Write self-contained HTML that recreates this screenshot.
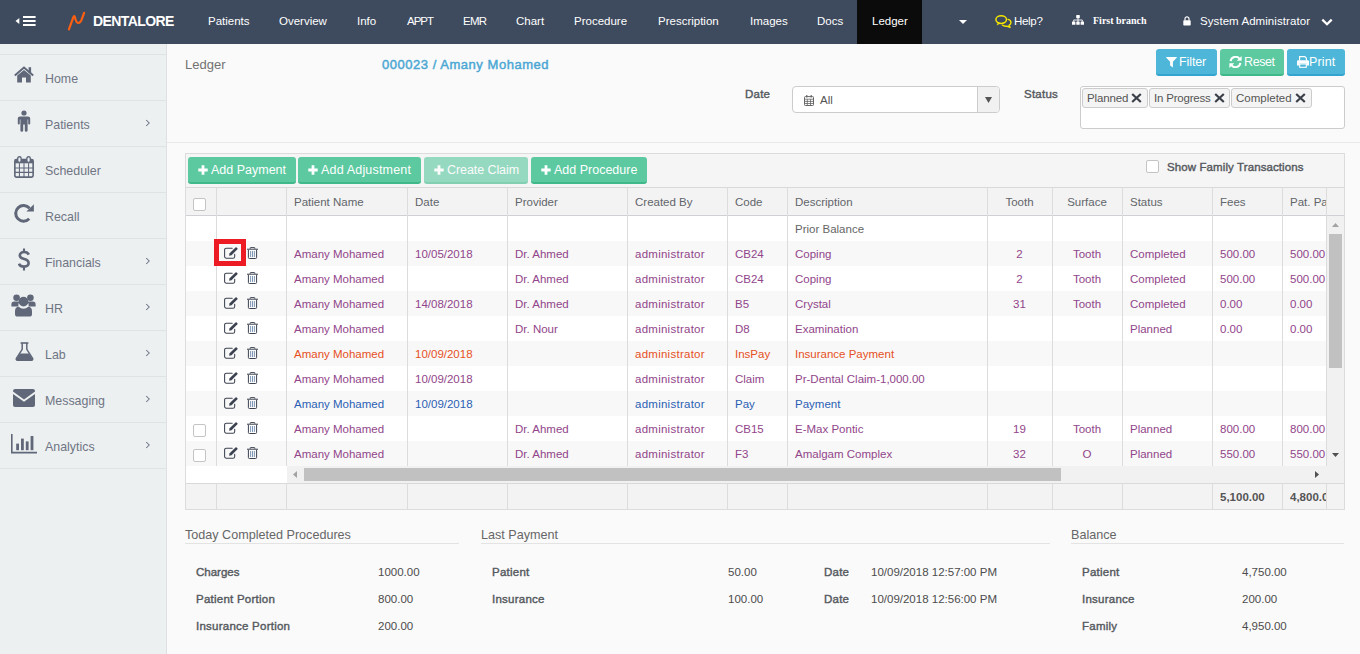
<!DOCTYPE html>
<html>
<head>
<meta charset="utf-8">
<title>Ledger</title>
<style>
*{box-sizing:border-box;margin:0;padding:0}
html,body{width:1360px;height:654px;overflow:hidden}
body{font-family:"Liberation Sans",sans-serif;font-size:13px;color:#5f6368;background:#fafafa;position:relative}
.abs{position:absolute;white-space:nowrap}
svg{display:block}
/* NAVBAR */
#nav{position:absolute;left:0;top:0;width:1360px;height:44px;background:#3e4a5e}
#nav .t{position:absolute;top:0;height:44px;line-height:43px;color:#fff;font-size:11.5px;white-space:nowrap}
#nav .active{position:absolute;left:857px;top:0;width:65px;height:44px;background:#0b0b0b}
/* SIDEBAR */
#side{position:absolute;left:0;top:44px;width:167px;height:610px;background:#edf0f1;border-right:1px solid #dde1e4}
#side .it{position:absolute;left:0;width:166px;height:46px;border-top:1px solid #dfe3e6}
#side .it .lb{position:absolute;left:45px;top:0;line-height:49px;font-size:12.4px;color:#6f7584}
#side .it .ic{position:absolute}
#side .it .ch{position:absolute;left:145px;top:18px}
/* content */
.btn{position:absolute;height:27px;border-radius:3px;color:#fff;font-size:12.5px;line-height:27px;white-space:nowrap}
.btn.blue{background:#4db6d9;border-bottom:2px solid #31a4cf}
.btn.green{background:#5cc9a0;border-bottom:2px solid #3fb88a}
.btn.dis{opacity:.62}

/* grid */
#grid{position:absolute;left:185px;top:153px;width:1160px;height:357px;border:1px solid #dcdcdc;background:#fff}
#tb{position:absolute;left:0;top:0;width:1158px;height:33px;background:#f5f5f5}
#hd{position:absolute;left:0;top:33px;width:1158px;height:29px;background:#f3f3f4;border-top:1px solid #d9d9d9;border-bottom:1px solid #d0d0d4}
#hd span{position:absolute;top:0;line-height:28px;color:#62656a;font-size:11.5px;white-space:nowrap}
.vl{position:absolute;width:1px;background:#dcdcde}
.row{position:absolute;left:0;width:1140px;height:25px;font-size:11.5px;line-height:27px;color:#91458a}
.row.alt{background:#f8f8f8}
.row span{position:absolute;top:0;white-space:nowrap}
.row.or{color:#e6501e}
.row.bl{color:#2b5fb4}
.row.gr{color:#666}
.c1{left:108px}.c2{left:229px}.c3{left:329px}.c4{left:449px;letter-spacing:.26px}.c5{left:549px}.c6{left:609px}
.c7{left:801px;width:65px;text-align:center}.c8{left:866px;width:70px;text-align:center}
.c9{left:944px}.c10{left:1034px}.c11{left:1104px}
.cb{position:absolute;width:13px;height:13px;border:1px solid #c4c4c4;border-radius:2px;background:#fff}
#ft{position:absolute;left:0;top:329px;width:1158px;height:26px;background:#f3f3f4;border-top:1px solid #d9d9d9}
#ft span{position:absolute;top:0;line-height:26px;font-weight:bold;color:#555;font-size:11.5px}
.sec{position:absolute;font-size:12.6px;color:#666;white-space:nowrap}
.ul{position:absolute;height:1px;background:#e3e3e3}
.lab{position:absolute;font-size:11.5px;font-weight:normal;-webkit-text-stroke:.4px #55595e;color:#55595e;white-space:nowrap;letter-spacing:.24px}
.val{position:absolute;font-size:11.5px;color:#4c4c4c;white-space:nowrap}
.tag{height:20px;line-height:18px;border:1px solid #ccc;border-radius:3px;background:#f4f4f4;font-size:11.5px;color:#555;padding-left:4px}
</style>
</head>
<body>
<!-- NAV -->
<div id="nav">
  <div class="active"></div>
  <svg class="abs" style="left:15px;top:16px" width="21" height="10" viewBox="0 0 21 10"><path d="M.5 5L4.3 2V8Z" fill="#fff"/><rect x="8" y="0" width="12.6" height="2" fill="#fff"/><rect x="8" y="4" width="12.6" height="2" fill="#fff"/><rect x="8" y="8" width="12.6" height="2" fill="#fff"/></svg>
  <svg class="abs" style="left:67px;top:11px" width="19" height="20" viewBox="0 0 19 20"><path d="M1.9 18.4L6.3 6.4Q7.3 3.6 8 6.4Q9.2 11.6 11.2 12Q13.6 12 15.1 7.4L17.1 1.8" fill="none" stroke="#fa5f12" stroke-width="2.2" stroke-linecap="round" stroke-linejoin="round"/></svg>
  <div class="t" style="left:93px;font-weight:bold;font-size:14px;letter-spacing:-.6px">DENTALORE</div>
  <div class="t" style="left:208px">Patients</div>
  <div class="t" style="left:279px">Overview</div>
  <div class="t" style="left:357px">Info</div>
  <div class="t" style="left:407px;letter-spacing:-1px">APPT</div>
  <div class="t" style="left:463px;letter-spacing:-.7px">EMR</div>
  <div class="t" style="left:516px">Chart</div>
  <div class="t" style="left:574px">Procedure</div>
  <div class="t" style="left:658px">Prescription</div>
  <div class="t" style="left:750px">Images</div>
  <div class="t" style="left:817px">Docs</div>
  <div class="t" style="left:872px">Ledger</div>
  <svg class="abs" style="left:959px;top:20px" width="8" height="4" viewBox="0 0 8 4"><path d="M0 0H8L4 4Z" fill="#fff"/></svg>
  <div class="t" style="left:1014px;letter-spacing:-.3px">Help?</div>
  <div class="t" style="left:1093px;font-family:'Liberation Serif',serif;font-weight:bold;font-size:10px;line-height:41px">First branch</div>
  <div class="t" style="left:1200px;letter-spacing:.07px">System Administrator</div>

  <svg class="abs" style="left:995px;top:15px" width="17" height="13" viewBox="0 0 17 13"><ellipse cx="6.2" cy="4.6" rx="5.3" ry="3.8" fill="none" stroke="#f3e500" stroke-width="1.5"/><path d="M3 7.6L1.6 10.4L5.4 8.4Z" fill="#f3e500"/><path d="M12.6 4.2C14.6 4.8 16 6 16 7.6C16 8.8 15.2 9.8 14 10.4L15 12.4L11.8 11.2C9.8 11.4 8 10.8 7 9.8" fill="none" stroke="#f3e500" stroke-width="1.4" stroke-linejoin="round"/></svg>
  <svg class="abs" style="left:1072px;top:15px" width="12" height="10" viewBox="0 0 12 10"><rect x="4.2" y="0" width="3.6" height="3.2" rx=".4" fill="#fff"/><rect x="0" y="6.6" width="3.4" height="3.2" rx=".4" fill="#fff"/><rect x="4.3" y="6.6" width="3.4" height="3.2" rx=".4" fill="#fff"/><rect x="8.6" y="6.6" width="3.4" height="3.2" rx=".4" fill="#fff"/><path d="M6 3v3.8M1.7 6.8V5h8.6v1.8" fill="none" stroke="#fff" stroke-width=".9"/></svg>
  <svg class="abs" style="left:1183px;top:16px" width="8" height="10" viewBox="0 0 8 10"><path d="M2 4.4V2.8a2 2 0 0 1 4 0V4.4" fill="none" stroke="#fff" stroke-width="1.2"/><rect x="0.3" y="4.2" width="7.4" height="5.2" rx=".7" fill="#fff"/></svg>
  <svg class="abs" style="left:1321px;top:18px" width="12" height="8" viewBox="0 0 12 8"><path d="M1.3 1.6L6 6.2L10.7 1.6" fill="none" stroke="#fff" stroke-width="2.3"/></svg>
</div>

<!-- SIDEBAR -->
<div id="side">
  <div class="it" style="top:10px"><svg class="ic" style="left:14px;top:11px" width="20" height="17" viewBox="0 0 20 17"><path d="M.8 9.4L10 1.6L19.2 9.4" fill="none" stroke="#5f6779" stroke-width="2"/><rect x="14.6" y="1.2" width="2.5" height="6" fill="#5f6779"/><path d="M3.2 9.6L10 4L16.8 9.6V16.4H12V11.4H8V16.4H3.2Z" fill="#5f6779"/></svg><div class="lb">Home</div></div>
  <div class="it" style="top:56px"><svg class="ic" style="left:17px;top:9px" width="14" height="22" viewBox="0 0 14 22"><circle cx="7" cy="3" r="2.6" fill="#5f6779"/><path d="M3 6.4H11A2.2 2.2 0 0 1 13.2 8.6V13.4A1 1 0 0 1 11.2 13.4V9.4H10.6V20.4A1.4 1.4 0 0 1 7.8 20.4V14.4H6.2V20.4A1.4 1.4 0 0 1 3.4 20.4V9.4H2.8V13.4A1 1 0 0 1 .8 13.4V8.6A2.2 2.2 0 0 1 3 6.4Z" fill="#5f6779"/></svg><div class="lb">Patients</div><svg class="ch" width="6" height="8" viewBox="0 0 6 8"><path d="M1.2 1L4.2 4L1.2 7" fill="none" stroke="#6c7486" stroke-width="1.05"/></svg></div>
  <div class="it" style="top:102px"><svg class="ic" style="left:14px;top:9px" width="20" height="22" viewBox="0 0 21 22" preserveAspectRatio="none"><rect x=".9" y="3.7" width="19.2" height="17.4" rx="1.6" fill="none" stroke="#5f6779" stroke-width="1.7"/><rect x=".9" y="3.7" width="19.2" height="3.6" fill="#5f6779"/><path d="M1 12H20M1 16.4H20M5.7 7.3V21M10.5 7.3V21M15.3 7.3V21" stroke="#5f6779" stroke-width="1.1" fill="none"/><rect x="3.9" y=".7" width="3.6" height="5.8" rx="1.7" fill="#edf0f1" stroke="#5f6779" stroke-width="1.4"/><rect x="13.5" y=".7" width="3.6" height="5.8" rx="1.7" fill="#edf0f1" stroke="#5f6779" stroke-width="1.4"/></svg><div class="lb">Scheduler</div></div>
  <div class="it" style="top:148px"><svg class="ic" style="left:14px;top:11px" width="20" height="19" viewBox="0 0 20 19"><path d="M15.5 4.3A7.8 7.8 0 1 0 15.2 14.7" fill="none" stroke="#5f6779" stroke-width="3"/><path d="M19.9 .3V7.6H12.4Z" fill="#5f6779"/></svg><div class="lb">Recall</div></div>
  <div class="it" style="top:194px"><svg class="ic" style="left:18px;top:9px" width="12" height="23" viewBox="0 0 12 23"><path d="M10.8 6.6C10 4.8 8.4 4 6.2 4C3.6 4 1.8 5.3 1.8 7.4C1.8 9.8 4 10.5 6.2 11.1C8.8 11.8 10.6 12.7 10.6 15.1C10.6 17.3 8.6 18.6 6 18.6C3.4 18.6 1.6 17.5 1 15.6" fill="none" stroke="#5f6779" stroke-width="2.6"/><path d="M6 .4V4.4M6 18.4V22.4" stroke="#5f6779" stroke-width="2.1"/></svg><div class="lb">Financials</div><svg class="ch" width="6" height="8" viewBox="0 0 6 8"><path d="M1.2 1L4.2 4L1.2 7" fill="none" stroke="#6c7486" stroke-width="1.05"/></svg></div>
  <div class="it" style="top:240px"><svg class="ic" style="left:11px;top:9px" width="25" height="23" viewBox="0 0 25 23"><circle cx="5.6" cy="3.8" r="3.3" fill="#5f6779"/><circle cx="19.4" cy="3.8" r="3.3" fill="#5f6779"/><path d="M.4 12.6V10.4A2.8 2.8 0 0 1 3.2 7.6H7A3 3 0 0 1 8.2 7.9A6.4 6.4 0 0 0 7.4 12.6Z" fill="#5f6779"/><path d="M24.6 12.6V10.4A2.8 2.8 0 0 0 21.8 7.6H18A3 3 0 0 0 16.8 7.9A6.4 6.4 0 0 1 17.6 12.6Z" fill="#5f6779"/><circle cx="12.5" cy="7.6" r="4.9" fill="#5f6779"/><path d="M4 20V17C4 14.2 5.8 12.8 7.8 12.8C9 14 10.7 14.7 12.5 14.7C14.3 14.7 16 14 17.2 12.8C19.2 12.8 21 14.2 21 17V20A2.6 2.6 0 0 1 18.4 22.6H6.6A2.6 2.6 0 0 1 4 20Z" fill="#5f6779"/></svg><div class="lb">HR</div><svg class="ch" width="6" height="8" viewBox="0 0 6 8"><path d="M1.2 1L4.2 4L1.2 7" fill="none" stroke="#6c7486" stroke-width="1.05"/></svg></div>
  <div class="it" style="top:286px"><svg class="ic" style="left:15px;top:11px" width="19" height="19" viewBox="0 0 19 19"><path d="M5.6 1H13.4" stroke="#5f6779" stroke-width="1.6"/><path d="M7.2 1V7.4L1.4 16.4A1.2 1.2 0 0 0 2.4 18.2H16.6A1.2 1.2 0 0 0 17.6 16.4L11.8 7.4V1" fill="none" stroke="#5f6779" stroke-width="1.5"/><path d="M5 11.4H14L17.4 16.8A.9.9 0 0 1 16.6 18.2H2.4A.9.9 0 0 1 1.6 16.8Z" fill="#5f6779"/></svg><div class="lb">Lab</div><svg class="ch" width="6" height="8" viewBox="0 0 6 8"><path d="M1.2 1L4.2 4L1.2 7" fill="none" stroke="#6c7486" stroke-width="1.05"/></svg></div>
  <div class="it" style="top:332px"><svg class="ic" style="left:13px;top:12px" width="22" height="18" viewBox="0 0 22 18"><path d="M0 2A2 2 0 0 1 2 0H20A2 2 0 0 1 22 2V2.6L11 10.4L0 2.6Z" fill="#5f6779"/><path d="M0 5L11 12.8L22 5V16A2 2 0 0 1 20 18H2A2 2 0 0 1 0 16Z" fill="#5f6779"/></svg><div class="lb">Messaging</div><svg class="ch" width="6" height="8" viewBox="0 0 6 8"><path d="M1.2 1L4.2 4L1.2 7" fill="none" stroke="#6c7486" stroke-width="1.05"/></svg></div>
  <div class="it" style="top:378px"><svg class="ic" style="left:11px;top:11px" width="26" height="20" viewBox="0 0 26 20"><path d="M.8 0V18.6H26" fill="none" stroke="#5f6779" stroke-width="1.6"/><rect x="5.2" y="9.6" width="2.8" height="6.6" fill="#5f6779"/><rect x="10" y="4.6" width="2.8" height="11.6" fill="#5f6779"/><rect x="14.8" y="7.4" width="2.8" height="8.8" fill="#5f6779"/><rect x="19.6" y="2" width="2.8" height="14.2" fill="#5f6779"/></svg><div class="lb">Analytics</div><svg class="ch" width="6" height="8" viewBox="0 0 6 8"><path d="M1.2 1L4.2 4L1.2 7" fill="none" stroke="#6c7486" stroke-width="1.05"/></svg></div>
  <div class="it" style="top:424px"></div>
</div>

<!-- CONTENT -->
<div id="content">
<div class="abs" style="left:185px;top:57px;font-size:13px;color:#727272">Ledger</div>
<div class="abs" style="left:382px;top:57px;font-size:13px;color:#4aa7d3;-webkit-text-stroke:.45px #4aa7d3;letter-spacing:.53px">000023 / Amany Mohamed</div>
<div class="btn blue" style="left:1156px;top:49px;width:61px"><svg class="abs" style="left:10px;top:8px" width="11" height="11" viewBox="0 0 11 11"><path d="M.3 0H10.7A.3.3 0 0 1 10.9.5L6.9 4.8V10.6L4.1 8.4V4.8L.1.5A.3.3 0 0 1 .3 0Z" fill="#fff"/></svg><span class="abs" style="left:23px;letter-spacing:-.1px">Filter</span></div>
<div class="btn green" style="left:1220px;top:49px;width:64px"><svg class="abs" style="left:9px;top:7px" width="13" height="12" viewBox="0 0 13 12"><path d="M1.6 5.2A5 5 0 0 1 10.4 2.6" fill="none" stroke="#fff" stroke-width="2"/><path d="M12.6 0V4.8H7.8Z" fill="#fff"/><path d="M11.4 6.8A5 5 0 0 1 2.6 9.4" fill="none" stroke="#fff" stroke-width="2"/><path d="M.4 12V7.2H5.2Z" fill="#fff"/></svg><span class="abs" style="left:24px;letter-spacing:-.4px">Reset</span></div>
<div class="btn blue" style="left:1287px;top:49px;width:58px"><svg class="abs" style="left:10px;top:7px" width="12" height="12" viewBox="0 0 12 12"><path d="M2.6 4.6V.6H7.8L9.4 2.2V4.6" fill="none" stroke="#fff" stroke-width="1.2"/><path d="M0 5.4A1.2 1.2 0 0 1 1.2 4.2H10.8A1.2 1.2 0 0 1 12 5.4V9.4H9.6V7.6H2.4V9.4H0Z" fill="#fff"/><rect x="2.7" y="8" width="6.6" height="3.3" fill="none" stroke="#fff" stroke-width="1.1"/></svg><span class="abs" style="left:22px;letter-spacing:.15px">Print</span></div>
<div class="lab" style="left:745px;top:88px">Date</div>
<div class="abs" style="left:792px;top:86px;width:208px;height:27px;border:1px solid #ccc;border-radius:4px;background:#fff;overflow:hidden"><div class="abs" style="left:184px;top:0;width:23px;height:25px;background:#f1f1f1;border-left:1px solid #ccc"></div><svg class="abs" style="left:11px;top:8px" width="10" height="11" viewBox="0 0 10 11"><rect x=".5" y="1.6" width="9" height="8.9" rx=".8" fill="none" stroke="#666" stroke-width="1"/><path d="M.5 4.2H9.5M.5 6.4H9.5M.5 8.5H9.5M3.3 4.2V10.5M6.5 4.2V10.5" stroke="#666" stroke-width=".8"/><path d="M2.8 0V2.6M7.2 0V2.6" stroke="#666" stroke-width="1.2"/></svg><span class="abs" style="left:27px;top:0;line-height:27px;font-size:11.5px;color:#555">All</span><svg class="abs" style="left:192px;top:10px" width="7" height="6" viewBox="0 0 7 6"><path d="M0 0H7L3.5 6Z" fill="#555"/></svg></div>
<div class="lab" style="left:1024px;top:88px">Status</div>
<div class="abs" style="left:1080px;top:86px;width:265px;height:43px;border:1px solid #ccc;border-radius:3px;background:#fff"></div>
<div class="abs tag" style="left:1082px;top:88px;width:66px"><span style="letter-spacing:-.15px">Planned</span><svg class="abs" style="left:48px;top:4px" width="11" height="10" viewBox="0 0 11 10"><path d="M1.2 1L9.8 9M9.8 1L1.2 9" stroke="#3a3f48" stroke-width="2.2"/></svg></div>
<div class="abs tag" style="left:1149px;top:88px;width:81px"><span style="letter-spacing:-.2px">In Progress</span><svg class="abs" style="left:64px;top:4px" width="11" height="10" viewBox="0 0 11 10"><path d="M1.2 1L9.8 9M9.8 1L1.2 9" stroke="#3a3f48" stroke-width="2.2"/></svg></div>
<div class="abs tag" style="left:1231px;top:88px;width:81px">Completed<svg class="abs" style="left:63px;top:4px" width="11" height="10" viewBox="0 0 11 10"><path d="M1.2 1L9.8 9M9.8 1L1.2 9" stroke="#3a3f48" stroke-width="2.2"/></svg></div>
<div class="ul" style="left:167px;top:142px;width:1193px;background:#e9e9e9"></div>

<div id="grid">
  <div id="tb">
    <div class="btn green" style="left:2px;top:3px;width:108px"><svg class="abs" style="left:10px;top:8px" width="10" height="10" viewBox="0 0 10 10"><path d="M3.6 .3h2.8v3.3H9.7v2.8H6.4V9.7H3.6V6.4H.3V3.6h3.3Z" fill="#fff"/></svg><span class="abs" style="left:23px">Add Payment</span></div>
    <div class="btn green" style="left:112px;top:3px;width:123px"><svg class="abs" style="left:10px;top:8px" width="10" height="10" viewBox="0 0 10 10"><path d="M3.6 .3h2.8v3.3H9.7v2.8H6.4V9.7H3.6V6.4H.3V3.6h3.3Z" fill="#fff"/></svg><span class="abs" style="left:23px;letter-spacing:.18px">Add Adjustment</span></div>
    <div class="btn green dis" style="left:238px;top:3px;width:104px"><svg class="abs" style="left:10px;top:8px" width="10" height="10" viewBox="0 0 10 10"><path d="M3.6 .3h2.8v3.3H9.7v2.8H6.4V9.7H3.6V6.4H.3V3.6h3.3Z" fill="#fff"/></svg><span class="abs" style="left:23px;letter-spacing:-.08px">Create Claim</span></div>
    <div class="btn green" style="left:345px;top:3px;width:116px"><svg class="abs" style="left:10px;top:8px" width="10" height="10" viewBox="0 0 10 10"><path d="M3.6 .3h2.8v3.3H9.7v2.8H6.4V9.7H3.6V6.4H.3V3.6h3.3Z" fill="#fff"/></svg><span class="abs" style="left:23px">Add Procedure</span></div>
    <div class="cb" style="left:960px;top:6px"></div>
    <span class="abs" style="left:981px;top:0;line-height:27px;font-size:11.5px;color:#55595e;-webkit-text-stroke:.4px #55595e;letter-spacing:.1px">Show Family Transactions</span>
  </div>
  <div id="hd">
    <div class="cb" style="left:7px;top:10px"></div>
    <span style="left:108px">Patient Name</span><span style="left:229px">Date</span><span style="left:329px">Provider</span><span style="left:449px">Created By</span><span style="left:549px">Code</span><span style="left:609px">Description</span><span style="left:801px;width:65px;text-align:center">Tooth</span><span style="left:866px;width:70px;text-align:center">Surface</span><span style="left:944px">Status</span><span style="left:1034px">Fees</span><span style="left:1104px;width:36px;overflow:hidden">Pat. Pa</span>
  </div>
  <div class="row gr" style="top:62px"><span class="c6">Prior Balance</span></div>
<div class="row alt" style="top:87px"><svg class="abs" style="left:38px;top:5.5px" width="14" height="12" viewBox="0 0 14 12"><path d="M10.7 7.2V9.5a1.7 1.7 0 0 1-1.7 1.7H2.3A1.7 1.7 0 0 1 .6 9.5V2.9A1.7 1.7 0 0 1 2.3 1.2H8.2" fill="none" stroke="#3c4250" stroke-width="1.05" stroke-linecap="round"/><path d="M5.1 8.7L5.6 6.3L11.5 .4a.8.8 0 0 1 1.1 0l.8.8a.8.8 0 0 1 0 1.1L7.5 8.2Z" fill="#3c4250"/></svg><svg class="abs" style="left:61px;top:5.5px" width="11" height="12" viewBox="0 0 11 12"><path d="M3.2 1.8V.9a.4.4 0 0 1 .4-.4h3.8a.4.4 0 0 1 .4.4v.9" fill="none" stroke="#3c4250" stroke-width=".9"/><rect x="0" y="1.7" width="11" height="1" fill="#3c4250"/><path d="M1.4 2.7V10.5a1 1 0 0 0 1 1h6.2a1 1 0 0 0 1-1V2.7" fill="none" stroke="#3c4250" stroke-width="1"/><path d="M3.6 4v6M5.5 4v6M7.4 4v6" stroke="#5d7fa8" stroke-width=".8"/></svg><span class="c1">Amany Mohamed</span><span class="c2">10/05/2018</span><span class="c3">Dr. Ahmed</span><span class="c4">administrator</span><span class="c5">CB24</span><span class="c6">Coping</span><span class="c7">2</span><span class="c8">Tooth</span><span class="c9">Completed</span><span class="c10">500.00</span><span class="c11">500.00</span></div>
<div class="row" style="top:112px"><svg class="abs" style="left:38px;top:5.5px" width="14" height="12" viewBox="0 0 14 12"><path d="M10.7 7.2V9.5a1.7 1.7 0 0 1-1.7 1.7H2.3A1.7 1.7 0 0 1 .6 9.5V2.9A1.7 1.7 0 0 1 2.3 1.2H8.2" fill="none" stroke="#3c4250" stroke-width="1.05" stroke-linecap="round"/><path d="M5.1 8.7L5.6 6.3L11.5 .4a.8.8 0 0 1 1.1 0l.8.8a.8.8 0 0 1 0 1.1L7.5 8.2Z" fill="#3c4250"/></svg><svg class="abs" style="left:61px;top:5.5px" width="11" height="12" viewBox="0 0 11 12"><path d="M3.2 1.8V.9a.4.4 0 0 1 .4-.4h3.8a.4.4 0 0 1 .4.4v.9" fill="none" stroke="#3c4250" stroke-width=".9"/><rect x="0" y="1.7" width="11" height="1" fill="#3c4250"/><path d="M1.4 2.7V10.5a1 1 0 0 0 1 1h6.2a1 1 0 0 0 1-1V2.7" fill="none" stroke="#3c4250" stroke-width="1"/><path d="M3.6 4v6M5.5 4v6M7.4 4v6" stroke="#5d7fa8" stroke-width=".8"/></svg><span class="c1">Amany Mohamed</span><span class="c3">Dr. Ahmed</span><span class="c4">administrator</span><span class="c5">CB24</span><span class="c6">Coping</span><span class="c7">2</span><span class="c8">Tooth</span><span class="c9">Completed</span><span class="c10">500.00</span><span class="c11">500.00</span></div>
<div class="row alt" style="top:137px"><svg class="abs" style="left:38px;top:5.5px" width="14" height="12" viewBox="0 0 14 12"><path d="M10.7 7.2V9.5a1.7 1.7 0 0 1-1.7 1.7H2.3A1.7 1.7 0 0 1 .6 9.5V2.9A1.7 1.7 0 0 1 2.3 1.2H8.2" fill="none" stroke="#3c4250" stroke-width="1.05" stroke-linecap="round"/><path d="M5.1 8.7L5.6 6.3L11.5 .4a.8.8 0 0 1 1.1 0l.8.8a.8.8 0 0 1 0 1.1L7.5 8.2Z" fill="#3c4250"/></svg><svg class="abs" style="left:61px;top:5.5px" width="11" height="12" viewBox="0 0 11 12"><path d="M3.2 1.8V.9a.4.4 0 0 1 .4-.4h3.8a.4.4 0 0 1 .4.4v.9" fill="none" stroke="#3c4250" stroke-width=".9"/><rect x="0" y="1.7" width="11" height="1" fill="#3c4250"/><path d="M1.4 2.7V10.5a1 1 0 0 0 1 1h6.2a1 1 0 0 0 1-1V2.7" fill="none" stroke="#3c4250" stroke-width="1"/><path d="M3.6 4v6M5.5 4v6M7.4 4v6" stroke="#5d7fa8" stroke-width=".8"/></svg><span class="c1">Amany Mohamed</span><span class="c2">14/08/2018</span><span class="c3">Dr. Ahmed</span><span class="c4">administrator</span><span class="c5">B5</span><span class="c6">Crystal</span><span class="c7">31</span><span class="c8">Tooth</span><span class="c9">Completed</span><span class="c10">0.00</span><span class="c11">0.00</span></div>
<div class="row" style="top:162px"><svg class="abs" style="left:38px;top:5.5px" width="14" height="12" viewBox="0 0 14 12"><path d="M10.7 7.2V9.5a1.7 1.7 0 0 1-1.7 1.7H2.3A1.7 1.7 0 0 1 .6 9.5V2.9A1.7 1.7 0 0 1 2.3 1.2H8.2" fill="none" stroke="#3c4250" stroke-width="1.05" stroke-linecap="round"/><path d="M5.1 8.7L5.6 6.3L11.5 .4a.8.8 0 0 1 1.1 0l.8.8a.8.8 0 0 1 0 1.1L7.5 8.2Z" fill="#3c4250"/></svg><svg class="abs" style="left:61px;top:5.5px" width="11" height="12" viewBox="0 0 11 12"><path d="M3.2 1.8V.9a.4.4 0 0 1 .4-.4h3.8a.4.4 0 0 1 .4.4v.9" fill="none" stroke="#3c4250" stroke-width=".9"/><rect x="0" y="1.7" width="11" height="1" fill="#3c4250"/><path d="M1.4 2.7V10.5a1 1 0 0 0 1 1h6.2a1 1 0 0 0 1-1V2.7" fill="none" stroke="#3c4250" stroke-width="1"/><path d="M3.6 4v6M5.5 4v6M7.4 4v6" stroke="#5d7fa8" stroke-width=".8"/></svg><span class="c1">Amany Mohamed</span><span class="c3">Dr. Nour</span><span class="c4">administrator</span><span class="c5">D8</span><span class="c6">Examination</span><span class="c9">Planned</span><span class="c10">0.00</span><span class="c11">0.00</span></div>
<div class="row alt or" style="top:187px"><svg class="abs" style="left:38px;top:5.5px" width="14" height="12" viewBox="0 0 14 12"><path d="M10.7 7.2V9.5a1.7 1.7 0 0 1-1.7 1.7H2.3A1.7 1.7 0 0 1 .6 9.5V2.9A1.7 1.7 0 0 1 2.3 1.2H8.2" fill="none" stroke="#3c4250" stroke-width="1.05" stroke-linecap="round"/><path d="M5.1 8.7L5.6 6.3L11.5 .4a.8.8 0 0 1 1.1 0l.8.8a.8.8 0 0 1 0 1.1L7.5 8.2Z" fill="#3c4250"/></svg><svg class="abs" style="left:61px;top:5.5px" width="11" height="12" viewBox="0 0 11 12"><path d="M3.2 1.8V.9a.4.4 0 0 1 .4-.4h3.8a.4.4 0 0 1 .4.4v.9" fill="none" stroke="#3c4250" stroke-width=".9"/><rect x="0" y="1.7" width="11" height="1" fill="#3c4250"/><path d="M1.4 2.7V10.5a1 1 0 0 0 1 1h6.2a1 1 0 0 0 1-1V2.7" fill="none" stroke="#3c4250" stroke-width="1"/><path d="M3.6 4v6M5.5 4v6M7.4 4v6" stroke="#5d7fa8" stroke-width=".8"/></svg><span class="c1">Amany Mohamed</span><span class="c2">10/09/2018</span><span class="c4">administrator</span><span class="c5">InsPay</span><span class="c6">Insurance Payment</span></div>
<div class="row" style="top:212px"><svg class="abs" style="left:38px;top:5.5px" width="14" height="12" viewBox="0 0 14 12"><path d="M10.7 7.2V9.5a1.7 1.7 0 0 1-1.7 1.7H2.3A1.7 1.7 0 0 1 .6 9.5V2.9A1.7 1.7 0 0 1 2.3 1.2H8.2" fill="none" stroke="#3c4250" stroke-width="1.05" stroke-linecap="round"/><path d="M5.1 8.7L5.6 6.3L11.5 .4a.8.8 0 0 1 1.1 0l.8.8a.8.8 0 0 1 0 1.1L7.5 8.2Z" fill="#3c4250"/></svg><svg class="abs" style="left:61px;top:5.5px" width="11" height="12" viewBox="0 0 11 12"><path d="M3.2 1.8V.9a.4.4 0 0 1 .4-.4h3.8a.4.4 0 0 1 .4.4v.9" fill="none" stroke="#3c4250" stroke-width=".9"/><rect x="0" y="1.7" width="11" height="1" fill="#3c4250"/><path d="M1.4 2.7V10.5a1 1 0 0 0 1 1h6.2a1 1 0 0 0 1-1V2.7" fill="none" stroke="#3c4250" stroke-width="1"/><path d="M3.6 4v6M5.5 4v6M7.4 4v6" stroke="#5d7fa8" stroke-width=".8"/></svg><span class="c1">Amany Mohamed</span><span class="c2">10/09/2018</span><span class="c4">administrator</span><span class="c5">Claim</span><span class="c6">Pr-Dental Claim-1,000.00</span></div>
<div class="row alt bl" style="top:237px"><svg class="abs" style="left:38px;top:5.5px" width="14" height="12" viewBox="0 0 14 12"><path d="M10.7 7.2V9.5a1.7 1.7 0 0 1-1.7 1.7H2.3A1.7 1.7 0 0 1 .6 9.5V2.9A1.7 1.7 0 0 1 2.3 1.2H8.2" fill="none" stroke="#3c4250" stroke-width="1.05" stroke-linecap="round"/><path d="M5.1 8.7L5.6 6.3L11.5 .4a.8.8 0 0 1 1.1 0l.8.8a.8.8 0 0 1 0 1.1L7.5 8.2Z" fill="#3c4250"/></svg><svg class="abs" style="left:61px;top:5.5px" width="11" height="12" viewBox="0 0 11 12"><path d="M3.2 1.8V.9a.4.4 0 0 1 .4-.4h3.8a.4.4 0 0 1 .4.4v.9" fill="none" stroke="#3c4250" stroke-width=".9"/><rect x="0" y="1.7" width="11" height="1" fill="#3c4250"/><path d="M1.4 2.7V10.5a1 1 0 0 0 1 1h6.2a1 1 0 0 0 1-1V2.7" fill="none" stroke="#3c4250" stroke-width="1"/><path d="M3.6 4v6M5.5 4v6M7.4 4v6" stroke="#5d7fa8" stroke-width=".8"/></svg><span class="c1">Amany Mohamed</span><span class="c2">10/09/2018</span><span class="c4">administrator</span><span class="c5">Pay</span><span class="c6">Payment</span></div>
<div class="row" style="top:262px"><div class="cb" style="left:7px;top:8px"></div><svg class="abs" style="left:38px;top:5.5px" width="14" height="12" viewBox="0 0 14 12"><path d="M10.7 7.2V9.5a1.7 1.7 0 0 1-1.7 1.7H2.3A1.7 1.7 0 0 1 .6 9.5V2.9A1.7 1.7 0 0 1 2.3 1.2H8.2" fill="none" stroke="#3c4250" stroke-width="1.05" stroke-linecap="round"/><path d="M5.1 8.7L5.6 6.3L11.5 .4a.8.8 0 0 1 1.1 0l.8.8a.8.8 0 0 1 0 1.1L7.5 8.2Z" fill="#3c4250"/></svg><svg class="abs" style="left:61px;top:5.5px" width="11" height="12" viewBox="0 0 11 12"><path d="M3.2 1.8V.9a.4.4 0 0 1 .4-.4h3.8a.4.4 0 0 1 .4.4v.9" fill="none" stroke="#3c4250" stroke-width=".9"/><rect x="0" y="1.7" width="11" height="1" fill="#3c4250"/><path d="M1.4 2.7V10.5a1 1 0 0 0 1 1h6.2a1 1 0 0 0 1-1V2.7" fill="none" stroke="#3c4250" stroke-width="1"/><path d="M3.6 4v6M5.5 4v6M7.4 4v6" stroke="#5d7fa8" stroke-width=".8"/></svg><span class="c1">Amany Mohamed</span><span class="c3">Dr. Ahmed</span><span class="c4">administrator</span><span class="c5">CB15</span><span class="c6">E-Max Pontic</span><span class="c7">19</span><span class="c8">Tooth</span><span class="c9">Planned</span><span class="c10">800.00</span><span class="c11">800.00</span></div>
<div class="row alt" style="top:287px"><div class="cb" style="left:7px;top:8px"></div><svg class="abs" style="left:38px;top:5.5px" width="14" height="12" viewBox="0 0 14 12"><path d="M10.7 7.2V9.5a1.7 1.7 0 0 1-1.7 1.7H2.3A1.7 1.7 0 0 1 .6 9.5V2.9A1.7 1.7 0 0 1 2.3 1.2H8.2" fill="none" stroke="#3c4250" stroke-width="1.05" stroke-linecap="round"/><path d="M5.1 8.7L5.6 6.3L11.5 .4a.8.8 0 0 1 1.1 0l.8.8a.8.8 0 0 1 0 1.1L7.5 8.2Z" fill="#3c4250"/></svg><svg class="abs" style="left:61px;top:5.5px" width="11" height="12" viewBox="0 0 11 12"><path d="M3.2 1.8V.9a.4.4 0 0 1 .4-.4h3.8a.4.4 0 0 1 .4.4v.9" fill="none" stroke="#3c4250" stroke-width=".9"/><rect x="0" y="1.7" width="11" height="1" fill="#3c4250"/><path d="M1.4 2.7V10.5a1 1 0 0 0 1 1h6.2a1 1 0 0 0 1-1V2.7" fill="none" stroke="#3c4250" stroke-width="1"/><path d="M3.6 4v6M5.5 4v6M7.4 4v6" stroke="#5d7fa8" stroke-width=".8"/></svg><span class="c1">Amany Mohamed</span><span class="c3">Dr. Ahmed</span><span class="c4">administrator</span><span class="c5">F3</span><span class="c6">Amalgam Complex</span><span class="c7">32</span><span class="c8">O</span><span class="c9">Planned</span><span class="c10">550.00</span><span class="c11">550.00</span></div>
  <div class="abs" style="left:101px;top:312px;width:1040px;height:17px;background:#f1f1f1"></div>
  <div class="abs" style="left:118px;top:314px;width:757px;height:13px;background:#c1c1c1"></div>
  <svg class="abs" style="left:107px;top:317px" width="4" height="7" viewBox="0 0 4 7"><path d="M4 0V7L0 3.5Z" fill="#a3a3a3"/></svg>
  <svg class="abs" style="left:1129px;top:317px" width="4" height="7" viewBox="0 0 4 7"><path d="M0 0V7L4 3.5Z" fill="#505050"/></svg>
  <div class="abs" style="left:1141px;top:62px;width:17px;height:267px;background:#f1f1f1"></div>
  <div class="abs" style="left:1143px;top:80px;width:13px;height:134px;background:#c1c1c1"></div>
  <svg class="abs" style="left:1146px;top:69px" width="7" height="4" viewBox="0 0 7 4"><path d="M0 4H7L3.5 0Z" fill="#a3a3a3"/></svg>
  <svg class="abs" style="left:1146px;top:299px" width="7" height="4" viewBox="0 0 7 4"><path d="M0 0H7L3.5 4Z" fill="#505050"/></svg>
  <div id="ft"><span style="left:1034px">5,100.00</span><span style="left:1104px;width:36px;overflow:hidden">4,800.00</span></div>
  <div class="vl" style="left:30px;top:33px;height:279px"></div><div class="vl" style="left:30px;top:329px;height:26px"></div><div class="vl" style="left:100px;top:33px;height:279px"></div><div class="vl" style="left:100px;top:329px;height:26px"></div><div class="vl" style="left:221px;top:33px;height:279px"></div><div class="vl" style="left:221px;top:329px;height:26px"></div><div class="vl" style="left:321px;top:33px;height:279px"></div><div class="vl" style="left:321px;top:329px;height:26px"></div><div class="vl" style="left:441px;top:33px;height:279px"></div><div class="vl" style="left:441px;top:329px;height:26px"></div><div class="vl" style="left:541px;top:33px;height:279px"></div><div class="vl" style="left:541px;top:329px;height:26px"></div><div class="vl" style="left:601px;top:33px;height:279px"></div><div class="vl" style="left:601px;top:329px;height:26px"></div><div class="vl" style="left:801px;top:33px;height:279px"></div><div class="vl" style="left:801px;top:329px;height:26px"></div><div class="vl" style="left:866px;top:33px;height:279px"></div><div class="vl" style="left:866px;top:329px;height:26px"></div><div class="vl" style="left:936px;top:33px;height:279px"></div><div class="vl" style="left:936px;top:329px;height:26px"></div><div class="vl" style="left:1026px;top:33px;height:279px"></div><div class="vl" style="left:1026px;top:329px;height:26px"></div><div class="vl" style="left:1096px;top:33px;height:279px"></div><div class="vl" style="left:1096px;top:329px;height:26px"></div><div class="vl" style="left:1140px;top:33px;height:279px"></div><div class="vl" style="left:1140px;top:329px;height:26px"></div>
</div>
<div class="abs" style="left:214px;top:239px;width:32px;height:27px;border:5px solid #ed1c24"></div>

<div class="sec" style="left:185px;top:528px">Today Completed Procedures</div><div class="ul" style="left:185px;top:543px;width:274px"></div>
<div class="sec" style="left:481px;top:528px">Last Payment</div><div class="ul" style="left:481px;top:543px;width:569px"></div>
<div class="sec" style="left:1071px;top:528px">Balance</div><div class="ul" style="left:1071px;top:543px;width:273px"></div>
<div class="lab" style="left:196px;top:566px;letter-spacing:0">Charges</div><div class="val" style="left:378px;top:566px">1000.00</div>
<div class="lab" style="left:196px;top:593px">Patient Portion</div><div class="val" style="left:378px;top:593px">800.00</div>
<div class="lab" style="left:196px;top:620px">Insurance Portion</div><div class="val" style="left:378px;top:620px">200.00</div>
<div class="lab" style="left:492px;top:566px">Patient</div><div class="val" style="left:728px;top:566px">50.00</div><div class="lab" style="left:824px;top:566px">Date</div><div class="val" style="left:871px;top:566px">10/09/2018 12:57:00 PM</div>
<div class="lab" style="left:492px;top:593px">Insurance</div><div class="val" style="left:728px;top:593px">100.00</div><div class="lab" style="left:824px;top:593px">Date</div><div class="val" style="left:871px;top:593px">10/09/2018 12:56:00 PM</div>
<div class="lab" style="left:1082px;top:566px">Patient</div><div class="val" style="left:1242px;top:566px">4,750.00</div>
<div class="lab" style="left:1082px;top:593px">Insurance</div><div class="val" style="left:1242px;top:593px">200.00</div>
<div class="lab" style="left:1082px;top:620px">Family</div><div class="val" style="left:1242px;top:620px">4,950.00</div>
</div>
</body>
</html>
